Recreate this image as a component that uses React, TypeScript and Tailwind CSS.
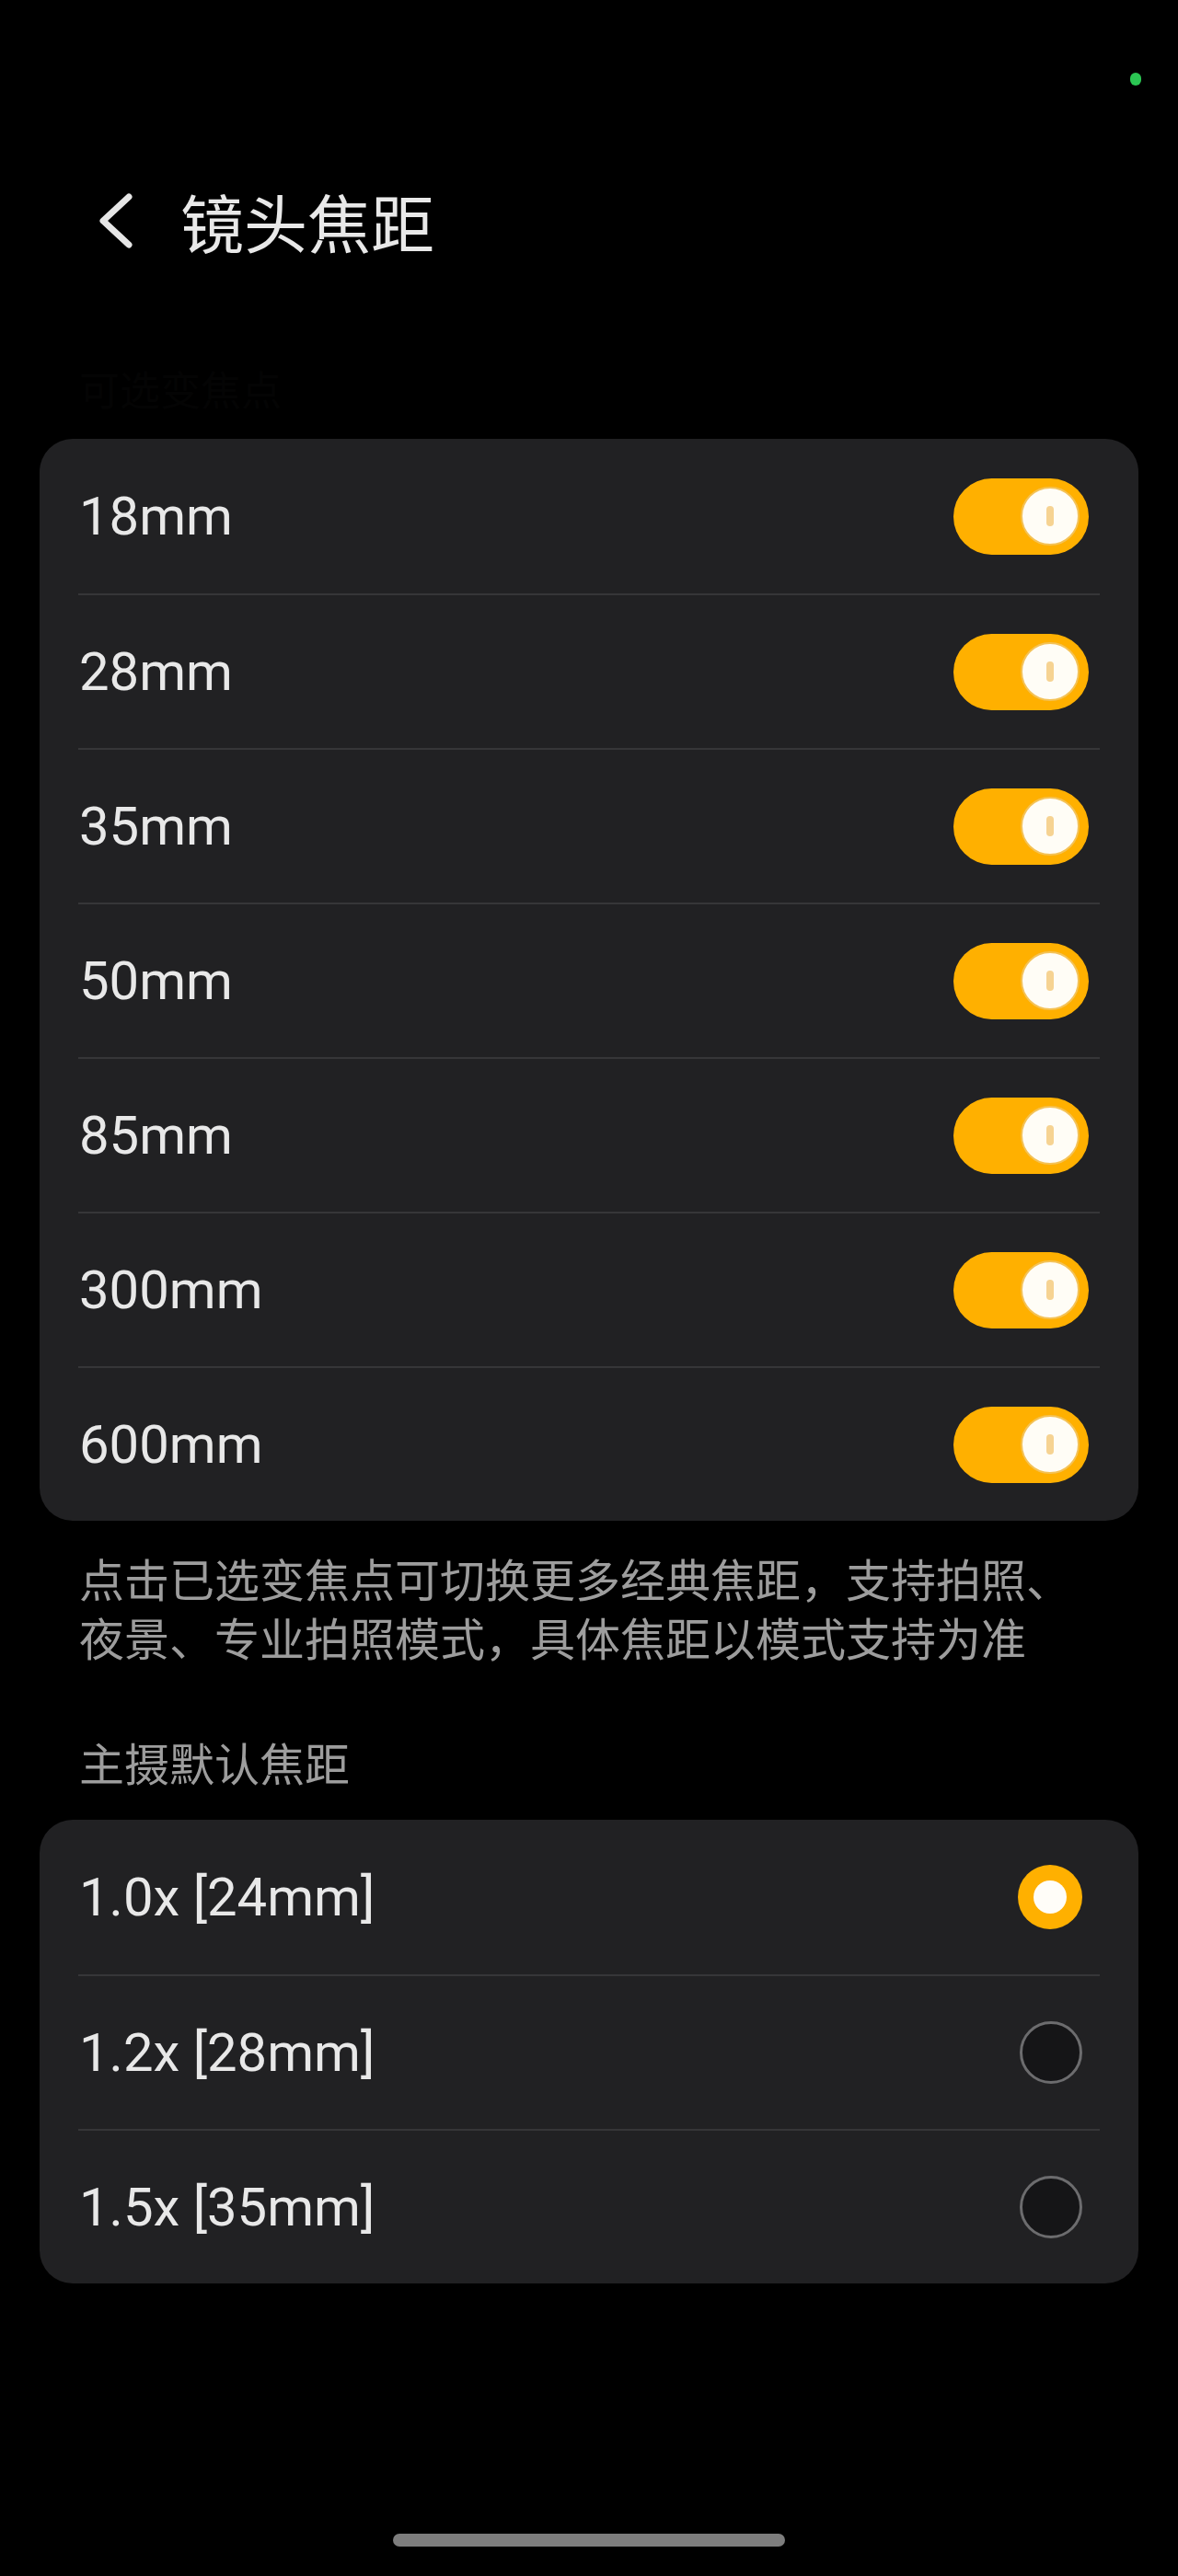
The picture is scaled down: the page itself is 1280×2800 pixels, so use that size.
const focalLengths = ['18mm', '28mm', '35mm', '50mm', '85mm', '300mm', '600mm']
const defaults = ['1.0x [24mm]', '1.2x [28mm]', '1.5x [35mm]']

const cjk = { fontFamily: '"Noto Sans CJK SC", "Noto Sans", sans-serif' }
const latin = { fontFamily: 'Roboto, "Noto Sans CJK SC", sans-serif' }

function Toggle() {
  return (
    <div className="flex h-[83px] w-[147px] items-center justify-end rounded-full bg-[#ffb000] pr-[10px]">
      <div className="flex h-[64px] w-[64px] items-center justify-center rounded-full border-2 border-[#f4c256] bg-[#fffdf6]">
        <div className="h-[22px] w-[8px] rounded-full bg-[#f6d392]" />
      </div>
    </div>
  )
}

function Radio({ checked }: { checked: boolean }) {
  if (checked) {
    return (
      <div className="flex h-[70px] w-[70px] items-center justify-center rounded-full bg-[#ffb000]">
        <div className="h-[36px] w-[36px] rounded-full bg-[#fffdf8]" />
      </div>
    )
  }
  return <div className="h-[68px] w-[68px] rounded-full border-[3px] border-[#6c6c6e] bg-[#151517]" />
}

function Row({ label, first, children, right }: { label: string; first: boolean; children: React.ReactNode; right: string }) {
  return (
    <div className={`mx-[42px] ${first ? '' : 'border-t-2 border-[#363638]'}`}>
      <div className={`flex items-center justify-between ${first ? 'h-[168px]' : 'h-[166px]'} ${right}`}>
        <span className="pl-[1px] text-[58px] leading-none text-[#e8e8e8]" style={latin}>
          {label}
        </span>
        {children}
      </div>
    </div>
  )
}

export default function App() {
  return (
    <div className="relative flex min-h-[2800px] w-[1280px] flex-col bg-black">
      <div className="absolute left-[1228px] top-[79px] h-[14px] w-[12px] rounded-full bg-[#2bc653]" />

      <header className="mt-[200px] flex h-[80px] items-center">
        <svg className="ml-[104px]" width="44" height="72" viewBox="0 0 44 72" fill="none">
          <path d="M36 10 L8 36 L36 62" stroke="#e6e6e6" strokeWidth="7" strokeLinecap="round" strokeLinejoin="round" />
        </svg>
        <h1 className="ml-[48px] text-[69px] leading-none text-[#e8e8e8]" style={cjk}>
          镜头焦距
        </h1>
      </header>

      <div className="mt-[118px] h-[48px] pl-[86px] text-[44px] leading-[48px] text-[#040404]" style={cjk}>
        可选变焦点
      </div>

      <section className="mx-[43px] mt-[31px] rounded-[36px] bg-[#212123]">
        {focalLengths.map((f, i) => (
          <Row key={f} label={f} first={i === 0} right="pr-[12px]">
            <Toggle />
          </Row>
        ))}
      </section>

      <div className="mt-[30px] pl-[86px] text-[49px] leading-[64px] text-[#9d9d9d]" style={cjk}>
        <p>点击已选变焦点可切换更多经典焦距，支持拍照、</p>
        <p>夜景、专业拍照模式，具体焦距以模式支持为准</p>
      </div>

      <h2 className="mt-[72px] pl-[86px] text-[49px] leading-[64px] text-[#9d9d9d]" style={cjk}>
        主摄默认焦距
      </h2>

      <section className="mx-[43px] mt-[31px] rounded-[36px] bg-[#212123]">
        {defaults.map((d, i) => (
          <Row key={d} label={d} first={i === 0} right="pr-[19px]">
            <Radio checked={i === 0} />
          </Row>
        ))}
      </section>

      <div className="mb-[32px] mt-auto flex justify-center">
        <div className="h-[14px] w-[426px] rounded-full bg-[#7d7d7d]" />
      </div>
    </div>
  )
}
